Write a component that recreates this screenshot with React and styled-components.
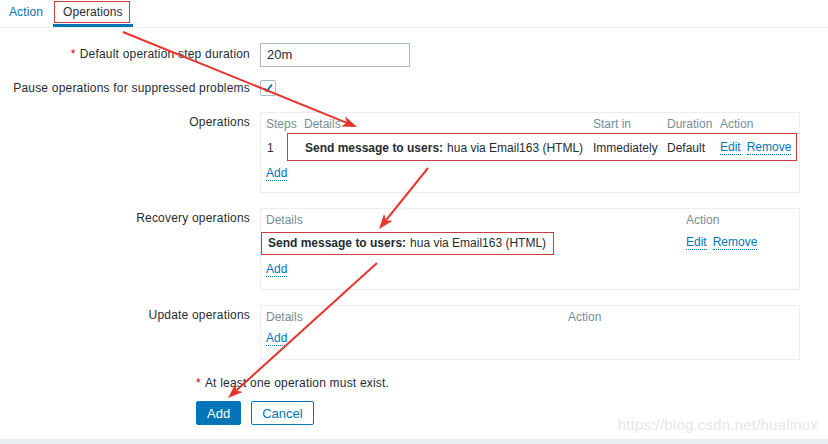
import React from "react";
import styled, { createGlobalStyle } from "styled-components";

const GlobalStyle = createGlobalStyle`
  html, body {
    margin: 0;
    padding: 0;
    background: #ffffff;
  }
  body {
    font-family: "Liberation Sans", Arial, sans-serif;
    font-size: 12px;
    color: #1f2c33;
  }
`;

const Page = styled("div")`
  position: relative;
  width: 828px;
  height: 444px;
  overflow: hidden;
  display: flex;
  flex-direction: column;
  background: #ffffff;
`;

const TabBar = styled("div")`
  display: flex;
  height: 27px;
  border-bottom: 1px solid #ebeef0;
`;

const Tab = styled("div")`
  box-sizing: border-box;
  display: flex;
  align-items: center;
  height: 27px;
  padding: 0 10px 0 ${(p) => (p.$first ? "9px" : "10px")};
  color: ${(p) => (p.$active ? "#1f2c33" : "#0275b8")};
  border-bottom: 3px solid ${(p) => (p.$active ? "#0275b8" : "transparent")};
  letter-spacing: 0.1px;
`;

const Form = styled("div")`
  display: flex;
  flex-direction: column;
`;

const FormRow = styled("div")`
  display: grid;
  grid-template-columns: 250px 540px;
  column-gap: 10px;
  margin-top: ${(p) => p.$gap}px;
`;

const Label = styled("div")`
  text-align: right;
  line-height: ${(p) => p.$lh || 18}px;
  padding-top: ${(p) => p.$pt || 0}px;
  white-space: nowrap;
  letter-spacing: 0.2px;
`;

const Required = styled("span")`
  color: #d40000;
  margin-right: 4px;
`;

const TextInput = styled("div")`
  box-sizing: border-box;
  width: 150px;
  height: 24px;
  border: 1px solid #acbbc2;
  padding: 0 6px;
  line-height: 22px;
  font-size: 13px;
`;

const Checkbox = styled("div")`
  box-sizing: border-box;
  width: 16px;
  height: 16px;
  border: 1px solid #acbbc2;
  border-radius: 2px;
  display: flex;
  align-items: center;
  justify-content: center;
`;

const Box = styled("div")`
  box-sizing: border-box;
  width: 540px;
  border: 1px solid #ebeef0;
  padding: 2px 5px ${(p) => p.$pb || 7}px;
`;

const Grid = styled("div")`
  display: grid;
  grid-template-columns: ${(p) => p.$cols};
`;

const Head = styled("div")`
  color: #768d99;
  line-height: 19px;
  white-space: nowrap;
`;

const Cell = styled("div")`
  display: flex;
  align-items: center;
  gap: 6px;
  height: ${(p) => p.$h}px;
  white-space: nowrap;
  padding-left: ${(p) => p.$pl || 0}px;
`;

const Strong = styled("b")`
  font-weight: bold;
  margin-right: 4px;
`;

const LinkText = styled("span")`
  color: #0275b8;
  line-height: 13px;
  border-bottom: 1px dotted #0275b8;
`;

const AddRow = styled("div")`
  display: flex;
  align-items: center;
  height: ${(p) => p.$h}px;
`;

const Footer = styled("div")`
  padding-left: 196px;
  margin-top: 15px;
  display: flex;
  flex-direction: column;
`;

const Note = styled("div")`
  line-height: 16px;
  letter-spacing: 0.2px;
`;

const Buttons = styled("div")`
  display: flex;
  gap: 10px;
  margin-top: 10px;
`;

const Button = styled("button")`
  box-sizing: border-box;
  height: 24px;
  padding: 0 10px;
  font-family: "Liberation Sans", Arial, sans-serif;
  font-size: 13px;
  border-radius: 2px;
  border: 1px solid #0275b8;
  background: ${(p) => (p.$primary ? "#0275b8" : "#ffffff")};
  color: ${(p) => (p.$primary ? "#ffffff" : "#0275b8")};
`;

const BottomStrip = styled("div")`
  margin-top: auto;
  height: 5px;
  background: #ebeef0;
`;

const Watermark = styled("div")`
  position: absolute;
  right: 10px;
  bottom: 11px;
  font-size: 15px;
  color: #e6e6e6;
  letter-spacing: 0.2px;
`;

const Overlay = styled("svg")`
  position: absolute;
  left: 0;
  top: 0;
  pointer-events: none;
`;

const RED = "#e5352d";

function Arrow({ x1, y1, x2, y2 }) {
  const dx = x2 - x1;
  const dy = y2 - y1;
  const len = Math.hypot(dx, dy);
  const ux = dx / len;
  const uy = dy / len;
  const L = 15;
  const W = 11;
  const bx = x2 - ux * L;
  const by = y2 - uy * L;
  const nx = -uy * (W / 2);
  const ny = ux * (W / 2);
  const notchX = x2 - ux * (L - 4);
  const notchY = y2 - uy * (L - 4);
  const pts = `${x2},${y2} ${bx + nx},${by + ny} ${notchX},${notchY} ${bx - nx},${by - ny}`;
  return (
    <g>
      <line x1={x1} y1={y1} x2={notchX} y2={notchY} stroke={RED} strokeWidth="2" />
      <polygon points={pts} fill={RED} />
    </g>
  );
}

function Annotations() {
  return (
    <Overlay width="828" height="444" viewBox="0 0 828 444">
      <rect x="54.5" y="1.5" width="75" height="21" fill="none" stroke="#d23a3f" strokeWidth="1" />
      <rect x="287.5" y="133.5" width="509" height="27" fill="none" stroke="#d23a3f" strokeWidth="1" />
      <rect x="261.5" y="232.5" width="292" height="22" fill="none" stroke="#d23a3f" strokeWidth="1" />
      <Arrow x1={123} y1={32} x2={357} y2={127} />
      <Arrow x1={428} y1={168} x2={379} y2={229} />
      <Arrow x1={377} y1={263} x2={228} y2={398} />
    </Overlay>
  );
}

function Check() {
  return (
    <svg width="12" height="12" viewBox="0 0 12 12">
      <path d="M2 6.5 L4.8 9 L10 2.5" fill="none" stroke="#0275b8" strokeWidth="2" />
    </svg>
  );
}

export default function App() {
  return (
    <Page>
      <GlobalStyle />
      <TabBar>
        <Tab $first>Action</Tab>
        <Tab $active>Operations</Tab>
      </TabBar>

      <Form>
        <FormRow $gap={15}>
          <Label $lh={23}>
            <Required>*</Required>Default operation step duration
          </Label>
          <TextInput>20m</TextInput>
        </FormRow>

        <FormRow $gap={13}>
          <Label $lh={16}>Pause operations for suppressed problems</Label>
          <Checkbox>
            <Check />
          </Checkbox>
        </FormRow>

        <FormRow $gap={16}>
          <Label $pt={1}>Operations</Label>
          <Box $pb={6}>
            <Grid $cols="38px 289px 74px 53px auto">
              <Head>Steps</Head>
              <Head>Details</Head>
              <Head>Start in</Head>
              <Head>Duration</Head>
              <Head>Action</Head>
              <Cell $h={27} $pl={1}>1</Cell>
              <Cell $h={27} $pl={1}>
                <span>
                  <Strong>Send message to users:</Strong>hua via Email163 (HTML)
                </span>
              </Cell>
              <Cell $h={27}>Immediately</Cell>
              <Cell $h={27}>Default</Cell>
              <Cell $h={27}>
                <LinkText>Edit</LinkText>
                <LinkText>Remove</LinkText>
              </Cell>
            </Grid>
            <AddRow $h={25}>
              <LinkText>Add</LinkText>
            </AddRow>
          </Box>
        </FormRow>

        <FormRow $gap={15}>
          <Label $pt={1}>Recovery operations</Label>
          <Box $pb={6}>
            <Grid $cols="420px auto">
              <Head>Details</Head>
              <Head>Action</Head>
              <Cell $h={26} $pl={2}>
                <span>
                  <Strong>Send message to users:</Strong>hua via Email163 (HTML)
                </span>
              </Cell>
              <Cell $h={26}>
                <LinkText>Edit</LinkText>
                <LinkText>Remove</LinkText>
              </Cell>
            </Grid>
            <AddRow $h={27}>
              <LinkText>Add</LinkText>
            </AddRow>
          </Box>
        </FormRow>

        <FormRow $gap={15}>
          <Label $pt={1}>Update operations</Label>
          <Box $pb={8}>
            <Grid $cols="302px auto">
              <Head>Details</Head>
              <Head>Action</Head>
            </Grid>
            <AddRow $h={24}>
              <LinkText>Add</LinkText>
            </AddRow>
          </Box>
        </FormRow>
      </Form>

      <Footer>
        <Note>
          <Required>*</Required>At least one operation must exist.
        </Note>
        <Buttons>
          <Button $primary>Add</Button>
          <Button>Cancel</Button>
        </Buttons>
      </Footer>

      <BottomStrip />
      <Watermark>https://blog.csdn.net/hualinux</Watermark>
      <Annotations />
    </Page>
  );
}
